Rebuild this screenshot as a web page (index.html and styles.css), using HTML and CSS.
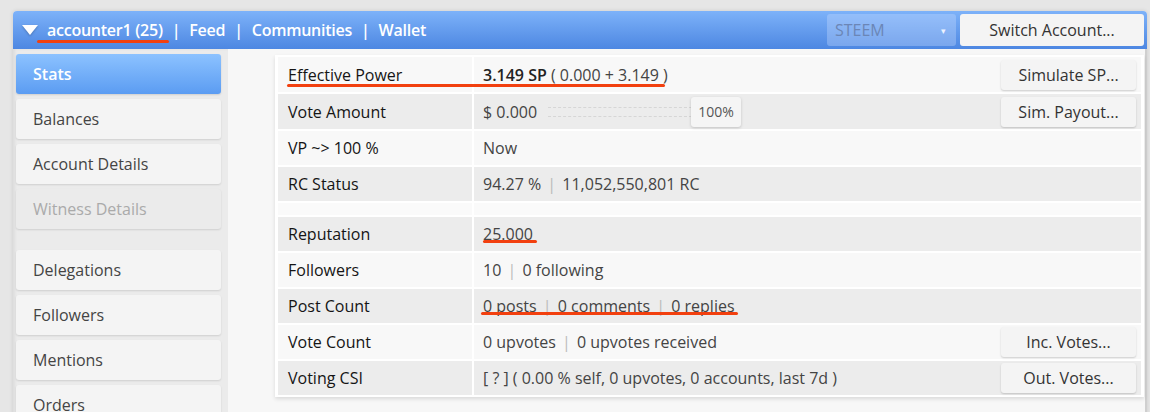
FILE: index.html
```html
<!DOCTYPE html>
<html lang="en">
<head>
    <meta charset="UTF-8">
    <title>Account Stats</title>
    <link rel="stylesheet" href="styles.css">
</head>
<body>
    <div class="window">
        <!-- top bar -->
        <header class="topbar">
            <div class="topbar-nav">
                <span class="caret"></span>
                <a class="nav-link">accounter1 (25)</a>
                <span class="nav-sep">|</span>
                <a class="nav-link">Feed</a>
                <span class="nav-sep">|</span>
                <a class="nav-link">Communities</a>
                <span class="nav-sep">|</span>
                <a class="nav-link">Wallet</a>
            </div>
            <div class="topbar-tools">
                <div class="chain-select">STEEM <span class="chain-arrow">&#9662;</span></div>
                <button class="btn btn-switch">Switch Account...</button>
            </div>
            <span class="redline line-account"></span>
        </header>

        <div class="content">
            <!-- left menu -->
            <nav class="sidebar">
                <div class="menu-item active">Stats</div>
                <div class="menu-item">Balances</div>
                <div class="menu-item">Account Details</div>
                <div class="menu-item disabled">Witness Details</div>
                <div class="menu-gap"></div>
                <div class="menu-item">Delegations</div>
                <div class="menu-item">Followers</div>
                <div class="menu-item">Mentions</div>
                <div class="menu-item">Orders</div>
            </nav>

            <main class="main">
                <div class="panel">
                    <table class="stats">
                        <tr class="light tall">
                            <td class="label">Effective Power</td>
                            <td class="value">
                                <div class="cell-row">
                                    <span><b>3.149 SP</b> ( 0.000 + 3.149 )</span>
                                    <button class="btn btn-row">Simulate SP...</button>
                                </div>
                            </td>
                        </tr>
                        <tr class="dark tall">
                            <td class="label">Vote Amount</td>
                            <td class="value">
                                <div class="cell-row">
                                    <div class="vote-amount">
                                        <span>$ 0.000</span>
                                        <div class="slider">
                                            <div class="slider-track"></div>
                                            <div class="slider-thumb">100%</div>
                                        </div>
                                    </div>
                                    <button class="btn btn-row">Sim. Payout...</button>
                                </div>
                            </td>
                        </tr>
                        <tr class="light">
                            <td class="label">VP ~&gt; 100 %</td>
                            <td class="value">Now</td>
                        </tr>
                        <tr class="dark">
                            <td class="label">RC Status</td>
                            <td class="value">94.27 % <span class="sep">|</span> 11,052,550,801 RC</td>
                        </tr>
                        <tr class="spacer">
                            <td></td>
                            <td></td>
                        </tr>
                        <tr class="dark">
                            <td class="label">Reputation</td>
                            <td class="value"><span class="link">25</span>.000</td>
                        </tr>
                        <tr class="light">
                            <td class="label">Followers</td>
                            <td class="value">10 <span class="sep">|</span> 0 following</td>
                        </tr>
                        <tr class="dark">
                            <td class="label">Post Count</td>
                            <td class="value"><span class="link">0 posts</span> <span class="sep">|</span> <span class="link">0 comments</span> <span class="sep">|</span> <span class="link">0 replies</span></td>
                        </tr>
                        <tr class="light">
                            <td class="label">Vote Count</td>
                            <td class="value">
                                <div class="cell-row">
                                    <span>0 upvotes <span class="sep">|</span> 0 upvotes received</span>
                                    <button class="btn btn-row">Inc. Votes...</button>
                                </div>
                            </td>
                        </tr>
                        <tr class="dark">
                            <td class="label">Voting CSI</td>
                            <td class="value">
                                <div class="cell-row">
                                    <span>[ ? ] ( 0.00 % self, 0 upvotes, 0 accounts, last 7d )</span>
                                    <button class="btn btn-row">Out. Votes...</button>
                                </div>
                            </td>
                        </tr>
                    </table>

                    <!-- red annotation marks -->
                    <span class="redline line-power"></span>
                    <span class="redline line-rep"></span>
                    <span class="redline line-posts"></span>
                </div>
            </main>
        </div>
    </div>
</body>
</html>
```

FILE: styles.css
```css
body {
    margin: 0;
    height: 412px;
    overflow: hidden;
    background-color: #e6e6e6;
    font-family: "Open Sans", "Liberation Sans", sans-serif;
    font-size: 16px;
    color: #444444;
}

.window {
    margin: 11px 3px 0 13px;
    width: 1134px;
    background-color: #f7f7f7;
    border-radius: 4px 4px 0 0;
    box-shadow: 0 0 4px rgba(0, 0, 0, 0.12);
}

/* top bar */
.topbar {
    position: relative;
    height: 38px;
    display: flex;
    align-items: center;
    justify-content: space-between;
    padding: 0 3px 0 9px;
    background: linear-gradient(#7db2f9, #4d87e2);
    border-radius: 4px 4px 0 0;
}

.topbar-nav {
    display: flex;
    align-items: center;
    gap: 9px;
    color: #ffffff;
    font-weight: 600;
    font-size: 16px;
    letter-spacing: -0.25px;
}

.caret {
    width: 0;
    height: 0;
    border-left: 8px solid transparent;
    border-right: 8px solid transparent;
    border-top: 10px solid #ffffff;
    margin-right: 0;
    filter: drop-shadow(0 1px 1px rgba(0, 0, 0, 0.25));
}

.nav-link {
    color: #ffffff;
}

.topbar-tools {
    display: flex;
    gap: 4px;
}

.chain-select {
    width: 129px;
    height: 32px;
    box-sizing: border-box;
    display: flex;
    align-items: center;
    justify-content: space-between;
    padding: 0 10px 0 8px;
    background-color: rgba(200, 220, 255, 0.35);
    border-radius: 3px;
    color: #6b86b6;
    font-size: 16px;
}

.chain-arrow {
    font-size: 9px;
    color: #eef3ff;
}

.btn {
    font-family: "Open Sans", "Liberation Sans", sans-serif;
    font-size: 16px;
    color: #333333;
    background-color: #f4f4f4;
    border: none;
    border-radius: 3px;
    cursor: pointer;
}

.btn-switch {
    width: 184px;
    height: 32px;
}

/* layout below bar */
.content {
    display: flex;
    border-right: 2px solid #cfcfcf;
}

.sidebar {
    width: 205px;
    flex-shrink: 0;
    padding: 5px 7px 0 3px;
    background-color: #ebebeb;
    box-shadow: inset 2px 0 3px rgba(0, 0, 0, 0.06);
}

.menu-item {
    height: 40px;
    margin-bottom: 5px;
    padding-left: 17px;
    display: flex;
    align-items: center;
    background-color: #f4f4f4;
    border-radius: 3px;
    box-shadow: 0 1px 2px rgba(0, 0, 0, 0.12);
    color: #444444;
}

.menu-item.active {
    background: linear-gradient(#8cc2ff, #5b9cf2);
    color: #ffffff;
    font-weight: 600;
}

.menu-item.disabled {
    background-color: #ebebeb;
    color: #aaaaaa;
}

.menu-gap {
    height: 16px;
}

.main {
    flex: 1;
    padding: 6px 1px 0 47px;
}

.panel {
    position: relative;
    background-color: #ffffff;
    padding: 0 1px;
    box-shadow: 0 2px 4px rgba(0, 0, 0, 0.12);
}

/* stats table */
.stats {
    width: 100%;
    border-spacing: 2px;
}

.stats td {
    height: 34px;
    padding: 0;
}

.stats .tall td {
    height: 35px;
}

.stats .light td {
    background-color: #f8f8f8;
}

.stats .dark td {
    background-color: #ececec;
}

.stats .spacer td {
    height: 12px;
    background-color: #fafafa;
}

.label {
    width: 184px;
    padding-left: 10px !important;
    color: #151515;
}

.value {
    padding-left: 9px !important;
    padding-right: 5px !important;
    color: #444444;
}

.value b {
    color: #222222;
    font-weight: 600;
}

.cell-row {
    display: flex;
    align-items: center;
    justify-content: space-between;
}

.sep {
    color: #bbbbbb;
    margin: 0 2px;
}

.link {
    text-decoration: underline;
    text-decoration-color: #777777;
}

.btn-row {
    width: 135px;
    height: 30px;
    box-shadow: 0 1px 2px rgba(0, 0, 0, 0.18);
}

.vote-amount {
    display: flex;
    align-items: center;
    gap: 11px;
}

.slider {
    display: flex;
    align-items: center;
}

.slider-track {
    width: 144px;
    height: 8px;
    border-top: 1px dashed #d6d6d6;
    border-bottom: 1px dashed #d6d6d6;
}

.slider-thumb {
    width: 50px;
    height: 30px;
    display: flex;
    align-items: center;
    justify-content: center;
    margin-left: -1px;
    background-color: #f5f5f5;
    border-radius: 3px;
    box-shadow: 0 1px 3px rgba(0, 0, 0, 0.18);
    font-size: 14px;
    color: #555555;
}

/* red annotation marks */
.redline {
    position: absolute;
    height: 3px;
    border-radius: 2px;
    background-color: #f2400f;
}

.line-account {
    left: 24px;
    top: 29px;
    width: 132px;
}

.line-power {
    left: 12px;
    top: 29px;
    width: 378px;
}

.line-rep {
    left: 208px;
    top: 185px;
    width: 54px;
}

.line-posts {
    left: 206px;
    top: 257px;
    width: 257px;
}
```
